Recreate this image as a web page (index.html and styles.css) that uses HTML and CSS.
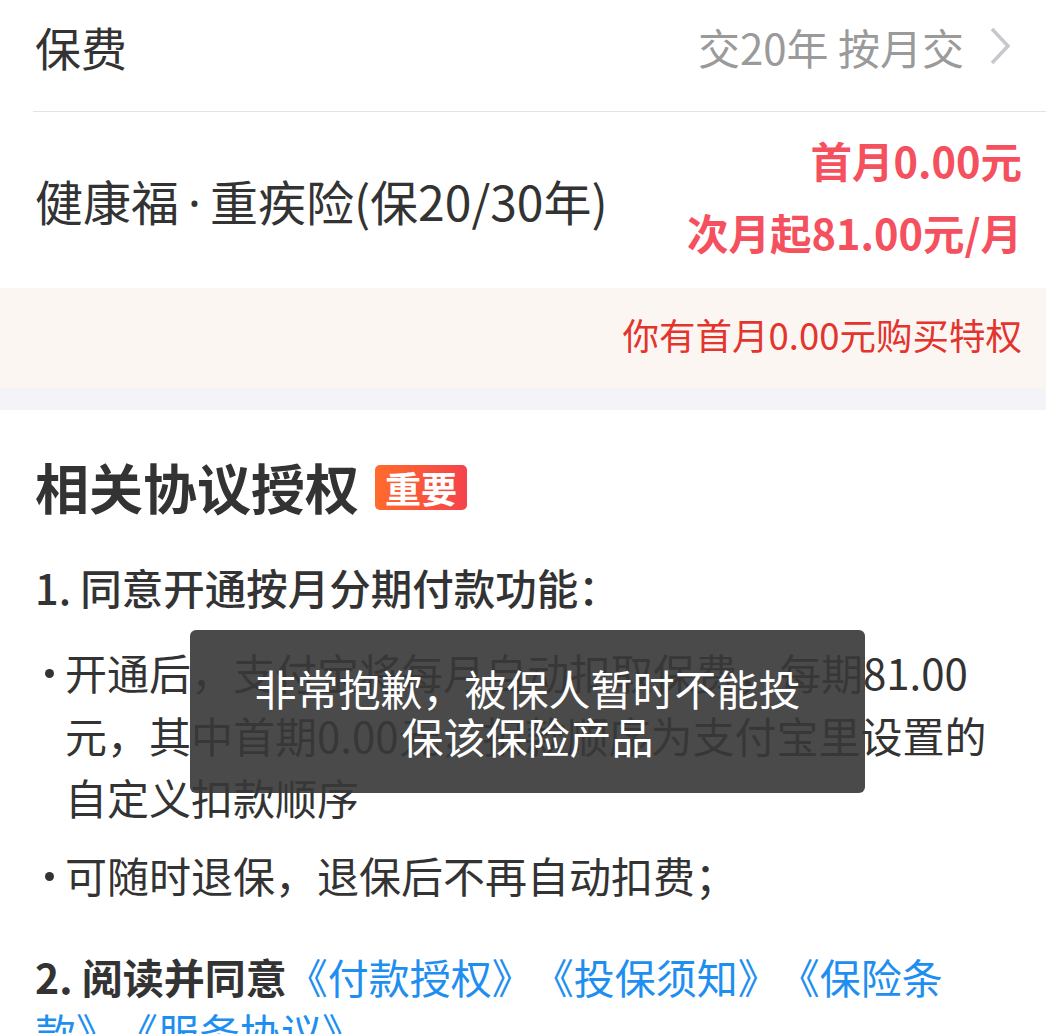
FILE: index.html
```html
<!DOCTYPE html>
<html lang="zh-CN">
<head>
<meta charset="utf-8">
<link rel="stylesheet" href="styles.css">
</head>
<body>
<div class="page">
  <div class="row-fee">
    <span class="label">保费</span>
    <span class="value">交20年 按月交
      <svg class="chev" viewBox="0 0 24 40" width="24" height="40"><path d="M4 3 L20 20 L4 37" fill="none" stroke="#c8c8cc" stroke-width="3.5"/></svg>
    </span>
  </div>
  <div class="divider"></div>
  <div class="row-product">
    <span class="title">健康福<span class="dot">·</span>重疾险(保20/30年)</span>
    <div class="prices">
      <div>首月0.00元</div>
      <div>次月起81.00元/月</div>
    </div>
  </div>
  <div class="banner">你有首月0.00元购买特权</div>
  <div class="gap"></div>
  <div class="section">
    <h2 class="heading">相关协议授权<span class="badge">重要</span></h2>
    <p class="item-title">1. 同意开通按月分期付款功能：</p>
    <ul class="bullets">
      <li>开通后，支付宝将每月自动扣取保费，每期81.00<br>元，其中首期0.00元，扣款顺序为支付宝里设置的<br>自定义扣款顺序</li>
      <li>可随时退保，退保后不再自动扣费；</li>
    </ul>
    <p class="item-two"><b>2. 阅读并同意</b><span class="link">《付款授权》《投保须知》《保险条<br>款》《服务协议》</span></p>
  </div>
  <div class="toast">非常抱歉，被保人暂时不能投保该保险产品</div>
</div>
</body>
</html>
```
FILE: styles.css
```css
html, body {
  margin: 0;
  padding: 0;
  background: #fff;
}
body {
  font-family: "Noto Sans CJK SC", "Noto Sans", sans-serif;
  color: #333;
  width: 1046px;
  height: 1034px;
  overflow: hidden;
  text-spacing-trim: space-all;
}
.page {
  position: relative;
  width: 1046px;
}
.row-fee {
  display: flex;
  justify-content: space-between;
  align-items: center;
  height: 92px;
  padding: 0 34px 0 35px;
  margin-bottom: 19px;
}
.label {
  font-size: 46px;
  color: #333;
}
.value {
  display: flex;
  align-items: center;
  gap: 24px;
  font-size: 42px;
  color: #9a9a9a;
}
.chev {
  display: block;
}
.divider {
  height: 1px;
  background: #e3e3e3;
  margin-left: 33px;
}
.row-product {
  display: flex;
  justify-content: space-between;
  align-items: center;
  height: 176px;
  padding: 0 24px 0 35px;
}
.title {
  font-size: 48px;
  color: #333;
}
.dot {
  font-family: "Noto Sans", sans-serif;
  margin: 0 9px;
}
.prices {
  text-align: right;
  font-size: 41.5px;
  font-weight: 700;
  color: #f4505e;
  line-height: 72px;
  margin-bottom: 8px;
}
.banner {
  box-sizing: border-box;
  height: 100px;
  line-height: 94px;
  padding: 0 24px 6px 0;
  background: #fcf6f3;
  color: #e3342d;
  font-size: 36.5px;
  text-align: right;
}
.gap {
  height: 22px;
  background: #f4f4f8;
}
.section {
  padding: 37px 20px 0 35px;
}
.heading {
  margin: 0;
  display: flex;
  align-items: center;
  font-size: 54px;
  font-weight: 700;
  line-height: 80px;
  color: #333;
}
.badge {
  margin-left: 16px;
  height: 45px;
  line-height: 45px;
  padding: 0 10px;
  border-radius: 5px;
  font-size: 36px;
  font-weight: 700;
  color: #fff;
  background: linear-gradient(90deg, #ff6b2b, #f4434c);
}
.item-title {
  margin: 30px 0 0;
  font-size: 41.5px;
  font-weight: 500;
  line-height: 60px;
}
.bullets {
  list-style: none;
  margin: 24px 0 0;
  padding: 0 0 0 30px;
  font-size: 42px;
  line-height: 62.5px;
  white-space: nowrap;
}
.bullets li {
  position: relative;
}
.bullets li::before {
  content: "";
  position: absolute;
  left: -20px;
  top: 28px;
  width: 9px;
  height: 9px;
  border-radius: 50%;
  background: #333;
}
.bullets li + li {
  margin-top: 15px;
}
.item-two {
  margin: 43px 0 0;
  font-size: 41px;
  line-height: 55px;
  white-space: nowrap;
}
.item-two b {
  font-weight: 700;
}
.link {
  color: #1e8ff0;
}
.toast {
  position: absolute;
  left: 190px;
  top: 630px;
  width: 675px;
  height: 163px;
  box-sizing: border-box;
  padding: 34px 62px 0;
  background: rgba(56, 56, 56, 0.91);
  border-radius: 6px;
  color: #fff;
  font-size: 42px;
  line-height: 48px;
  text-align: center;
}
```
